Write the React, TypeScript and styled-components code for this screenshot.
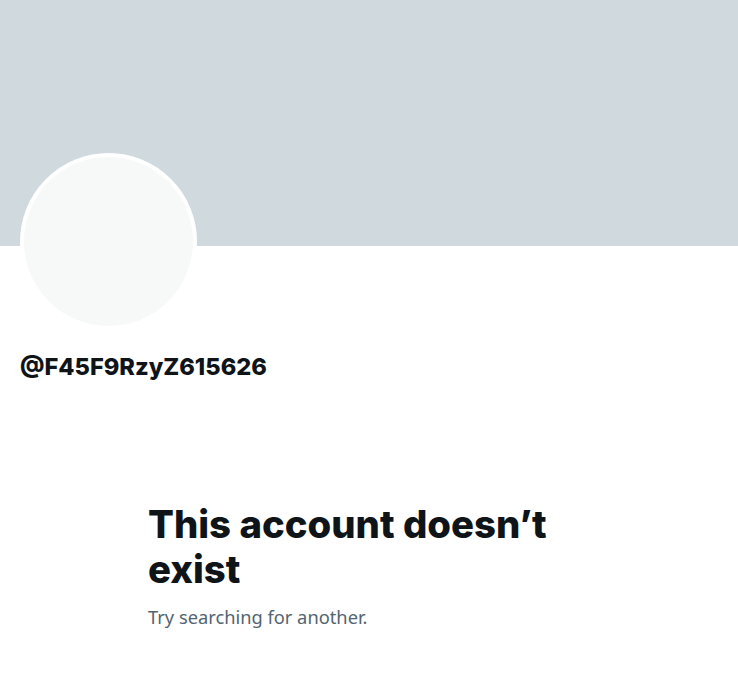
import React from "react";
import styled, { createGlobalStyle } from "styled-components";

const Global = createGlobalStyle`
  html, body { margin: 0; padding: 0; background: #ffffff; }
  body { font-family: Inter, "Noto Sans", sans-serif; color: #0f1419; }
`;

const Page = styled.main`
  width: 738px;
  min-height: 694px;
  display: flex;
  flex-direction: column;
`;

const Banner = styled.div`
  height: 246px;
  background: #cfd9de;
`;

const ProfileHeader = styled.section`
  padding: 0 20px;
  display: flex;
  flex-direction: column;
  align-items: flex-start;
`;

const Avatar = styled.div`
  margin-top: -93px;
  width: 169px;
  height: 169px;
  border-radius: 50%;
  border: 4px solid #ffffff;
  background: #f7f9f9;
`;

const Handle = styled.h2`
  margin: 22px 0 0;
  font-family: Inter, "Noto Sans", sans-serif;
  font-weight: 800;
  font-size: 23.6px;
  line-height: 30px;
  color: #0f1419;
`;

const EmptyState = styled.section`
  width: 442px;
  margin: 120px auto 0;
  display: flex;
  flex-direction: column;
`;

const Title = styled.h1`
  margin: 0;
  font-family: Inter, "Noto Sans", sans-serif;
  font-weight: 800;
  font-size: 38.3px;
  line-height: 45px;
  color: #0f1419;
`;

const Subtitle = styled.p`
  margin: 12px 0 0;
  font-family: "Noto Sans", sans-serif;
  font-weight: 400;
  font-size: 18.3px;
  line-height: 25px;
  color: #536471;
`;

export default function App() {
  return (
    <>
      <Global />
      <Page>
        <Banner />
        <ProfileHeader>
          <Avatar />
          <Handle>@F45F9RzyZ615626</Handle>
        </ProfileHeader>
        <EmptyState>
          <Title>This account doesn’t exist</Title>
          <Subtitle>Try searching for another.</Subtitle>
        </EmptyState>
      </Page>
    </>
  );
}
